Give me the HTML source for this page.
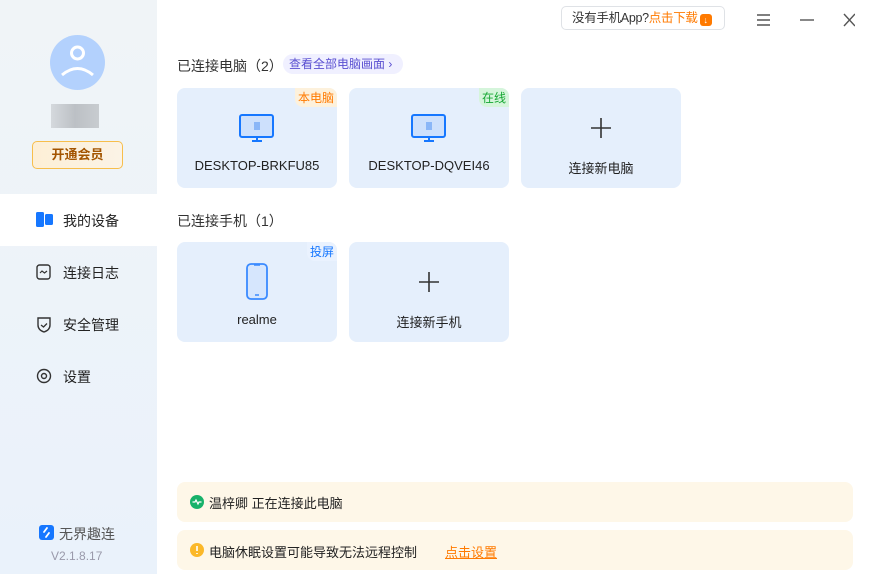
<html><head><style>
*{margin:0;padding:0;box-sizing:border-box}
body{width:870px;height:574px;overflow:hidden;background:#fff;font-family:"Liberation Sans","Noto Sans CJK SC",sans-serif;position:relative;color:#222}
.side{position:absolute;left:0;top:0;width:157px;height:574px;background:linear-gradient(#f0f4f7,#eaf2fb)}
.abs{position:absolute}
.nav{position:absolute;left:0;width:157px;height:52px;font-size:14px;color:#222}
.nav span{position:absolute;left:63px;top:17px}
.nav svg{position:absolute;left:36px;top:18px}
.card{position:absolute;width:160px;height:100px;background:#e5effc;border-radius:8px;font-size:13px;text-align:center}
.card .lbl{position:absolute;left:0;right:0;top:70px}
.tag{position:absolute;right:0;top:0;font-size:12px;padding:1px 3px;border-radius:0 8px 0 8px}
.h{position:absolute;left:177px;font-size:14px;color:#333}
.note{position:absolute;left:177px;width:676px;height:40px;background:#fef7e8;border-radius:8px;font-size:13px}
</style></head><body>
<div class="side">
 <div class="abs" style="left:50px;top:35px;width:55px;height:55px;border-radius:50%;background:#b3d1fd"></div>
 <svg class="abs" style="left:50px;top:35px" width="55" height="55"><circle cx="27.5" cy="18" r="6" fill="none" stroke="#fff" stroke-width="3"/><path d="M12 40 Q27.5 27 43 40" fill="none" stroke="#fff" stroke-width="3"/></svg>
 <div class="abs" style="left:51px;top:104px;width:48px;height:24px;background:linear-gradient(90deg,#d5d9dd,#bcc0c5,#c8ccd0)"></div>
 <div class="abs" style="left:32px;top:141px;width:91px;height:28px;border:1px solid #f7be4c;border-radius:5px;background:linear-gradient(90deg,#fdefd6,#fbf3e6);color:#a35400;font-size:13px;font-weight:bold;text-align:center;line-height:26px">开通会员</div>
 <div class="nav" style="top:194px;background:#fff"><svg width="18" height="16"><rect x="0" y="0" width="8" height="15" rx="1.5" fill="#1677ff"/><rect x="9" y="2" width="8" height="11" rx="1.5" fill="#1677ff"/></svg><span>我的设备</span></div>
 <div class="nav" style="top:246px"><svg width="16" height="16"><rect x="1" y="1" width="13" height="14" rx="2.5" fill="none" stroke="#333" stroke-width="1.4"/><path d="M4 9 L6 7 L8.5 9 L11 7" fill="none" stroke="#333" stroke-width="1.2"/></svg><span>连接日志</span></div>
 <div class="nav" style="top:298px"><svg width="16" height="17"><path d="M2 2 L14 2 L14 9 Q14 14 8 16 Q2 14 2 9 Z" fill="none" stroke="#333" stroke-width="1.4"/><path d="M5 9 L7.5 11 L11 7.5" fill="none" stroke="#333" stroke-width="1.3"/></svg><span>安全管理</span></div>
 <div class="nav" style="top:350px"><svg width="16" height="16"><circle cx="8" cy="8" r="6.5" fill="none" stroke="#333" stroke-width="1.4"/><circle cx="8" cy="8" r="2.5" fill="none" stroke="#333" stroke-width="1.4"/></svg><span>设置</span></div>
 <div class="abs" style="left:39px;top:525px;width:15px;height:15px;border-radius:3px;background:#1677ff"></div>
 <svg class="abs" style="left:39px;top:525px" width="15" height="15"><path d="M8 3 L5 7 M10 8 L7 12" stroke="#fff" stroke-width="1.8" stroke-linecap="round"/></svg>
 <div class="abs" style="left:59px;top:524px;font-size:14px;color:#555">无界趣连</div>
 <div class="abs" style="left:51px;top:549px;font-size:12px;color:#99a">V2.1.8.17</div>
</div>
<div class="abs" style="left:561px;top:6px;width:164px;height:24px;border:1px solid #dfe2e6;border-radius:5px;font-size:12.5px;line-height:22px;padding-left:10px;color:#333;white-space:nowrap;letter-spacing:-0.3px">没有手机App?<span style="color:#ff7a00">点击下载</span><span style="display:inline-block;width:12px;height:12px;background:#ff7a00;border-radius:3px;vertical-align:-1px;margin-left:2px;color:#fff;font-size:9px;line-height:12px;text-align:center">↓</span></div>
<svg class="abs" style="left:755px;top:12px" width="100" height="16"><path d="M2 3H15M2 8H15M2 13H15" stroke="#555" stroke-width="1.4"/><path d="M45 8H59" stroke="#555" stroke-width="1.4"/><path d="M89 2L100 14M100 2L89 14" stroke="#555" stroke-width="1.4"/></svg>
<div class="h" style="top:56px">已连接电脑（2）</div>
<div class="abs" style="left:283px;top:54px;width:120px;height:20px;border-radius:10px;background:#f0f0ff;color:#5a4fd1;font-size:12px;line-height:20px;padding-left:6px">查看全部电脑画面 ›</div>
<div class="card" style="left:177px;top:88px"><div class="tag" style="background:#fdf1dc;color:#ff7a00">本电脑</div>
<svg class="abs" style="left:61px;top:25px" width="38" height="30"><rect x="2" y="2" width="33" height="22" rx="2" fill="#cde0fc" stroke="#1677ff" stroke-width="2"/><rect x="16" y="9" width="6" height="8" fill="#8ab6f7"/><path d="M14 28H24M19 24V28" stroke="#1677ff" stroke-width="2"/></svg><div class="lbl">DESKTOP-BRKFU85</div></div>
<div class="card" style="left:349px;top:88px"><div class="tag" style="background:#d5f5db;color:#17a834">在线</div>
<svg class="abs" style="left:61px;top:25px" width="38" height="30"><rect x="2" y="2" width="33" height="22" rx="2" fill="#cde0fc" stroke="#1677ff" stroke-width="2"/><rect x="16" y="9" width="6" height="8" fill="#8ab6f7"/><path d="M14 28H24M19 24V28" stroke="#1677ff" stroke-width="2"/></svg><div class="lbl">DESKTOP-DQVEI46</div></div>
<div class="card" style="left:521px;top:88px"><svg class="abs" style="left:70px;top:30px" width="20" height="20"><path d="M10 0V20M0 10H20" stroke="#333" stroke-width="1.6"/></svg><div class="lbl">连接新电脑</div></div>
<div class="h" style="top:211px">已连接手机（1）</div>
<div class="card" style="left:177px;top:242px"><div class="tag" style="background:#eaf2fe;color:#1677ff">投屏</div>
<svg class="abs" style="left:68px;top:20px" width="24" height="40"><rect x="2" y="2" width="20" height="35" rx="4" fill="#d6e6fd" stroke="#3a8aff" stroke-width="1.8"/><path d="M9 3H15M10 33H14" stroke="#3a8aff" stroke-width="1.5"/></svg><div class="lbl">realme</div></div>
<div class="card" style="left:349px;top:242px"><svg class="abs" style="left:70px;top:30px" width="20" height="20"><path d="M10 0V20M0 10H20" stroke="#333" stroke-width="1.6"/></svg><div class="lbl">连接新手机</div></div>
<div class="note" style="top:482px"><svg class="abs" style="left:13px;top:13px" width="14" height="14"><circle cx="7" cy="7" r="7" fill="#17b26a"/><path d="M2.5 7H5L6 5L8 9L9 7H11.5" fill="none" stroke="#fff" stroke-width="1.2"/></svg><span class="abs" style="left:32px;top:11px">温梓卿 正在连接此电脑</span></div>
<div class="note" style="top:530px"><svg class="abs" style="left:13px;top:13px" width="14" height="14"><circle cx="7" cy="7" r="7" fill="#fbb829"/><path d="M7 3V8M7 10V11" stroke="#fff" stroke-width="1.6"/></svg><span class="abs" style="left:32px;top:12px">电脑休眠设置可能导致无法远程控制</span><span class="abs" style="left:268px;top:12px;color:#ff7a00;text-decoration:underline">点击设置</span></div>
</body></html>
